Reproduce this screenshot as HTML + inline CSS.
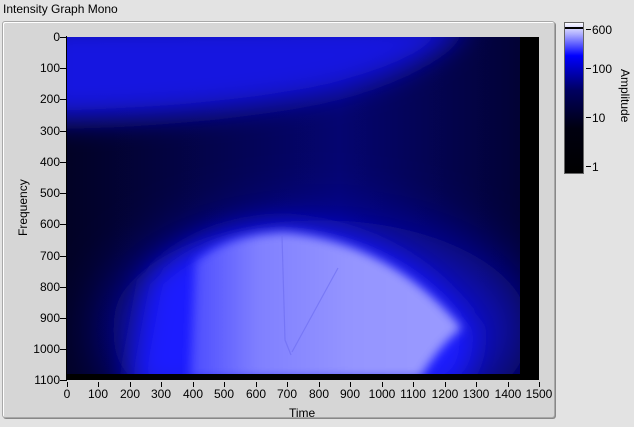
<!DOCTYPE html>
<html><head><style>
html,body{margin:0;width:634px;height:427px;overflow:hidden}
body{background:#e3e3e3;font-family:"Liberation Sans",sans-serif;font-size:12px;color:#000;position:relative}
.a{position:absolute}
.yl{position:absolute;left:10px;width:50px;text-align:right;line-height:12px}
.xl{position:absolute;top:388px;width:40px;text-align:center;line-height:12px}
</style></head><body>
<div class="a" style="left:3px;top:2px;font-size:12px">Intensity Graph Mono</div>
<div class="a" style="left:2px;top:21px;width:551px;height:395px;background:#d6d6d6;border:1px solid #a8a8a8;border-radius:3px;box-shadow:inset 1px 1px 0 #fff,1px 1px 0 #888"></div>
<svg class="a" style="left:0;top:0" width="634" height="427">
<defs>
<filter id="b1" filterUnits="userSpaceOnUse" x="0" y="0" width="634" height="427"><feGaussianBlur stdDeviation="14"/></filter>
<filter id="b2" filterUnits="userSpaceOnUse" x="0" y="0" width="634" height="427"><feGaussianBlur stdDeviation="5"/></filter>
<filter id="b3" filterUnits="userSpaceOnUse" x="0" y="0" width="634" height="427"><feGaussianBlur stdDeviation="30"/></filter>
<clipPath id="c"><rect x="67" y="37" width="453" height="337"/></clipPath>
<linearGradient id="bg" x1="0" y1="0" x2="1" y2="0"><stop offset="0" stop-color="#020225"/><stop offset=".6" stop-color="#050570"/><stop offset="1" stop-color="#020235"/></linearGradient>
<linearGradient id="br" x1="0" y1="0" x2="1" y2="0"><stop offset="0" stop-color="#4a4aff"/><stop offset=".25" stop-color="#8080ff"/><stop offset=".6" stop-color="#9595ff"/><stop offset="1" stop-color="#9a9aff"/></linearGradient>
<linearGradient id="cb" x1="0" y1="0" x2="0" y2="1"><stop offset="0" stop-color="#fff"/><stop offset=".08" stop-color="#aaaaff"/><stop offset=".22" stop-color="#0000ff"/><stop offset=".45" stop-color="#000060"/><stop offset=".7" stop-color="#000010"/><stop offset="1" stop-color="#000"/></linearGradient>
</defs>
<rect x="67" y="37" width="472" height="343" fill="#000"/>
<g clip-path="url(#c)">
<rect x="67" y="37" width="453" height="337" fill="url(#bg)"/>
<ellipse cx="320" cy="330" rx="210" ry="110" fill="#0808b8" filter="url(#b3)"/>
<path d="M40 20 L470 20 Q430 70 320 95 Q200 118 40 120 Z" fill="#1818e0" filter="url(#b1)"/>
<path d="M130 390 L150 280 Q200 228 285 226 Q410 236 475 330 Q470 390 440 390 Z" fill="#1a1aff" filter="url(#b1)"/>
<path d="M190 378 L195 262 Q225 234 285 232 Q390 242 462 328 Q440 345 420 378 Z" fill="url(#br)" filter="url(#b2)"/>
<path d="M282 236 L285 340 L291 355 M338 268 L292 352" stroke="#6a6af0" stroke-width="1.2" fill="none" opacity=".6"/>
</g>
<rect x="66" y="36" width="1" height="345" fill="#000"/>
<g stroke="#000" stroke-width="1">
<path d="M60 37.5h6M60 68.5h6M60 99.5h6M60 131.5h6M60 162.5h6M60 193.5h6M60 224.5h6M60 256.5h6M60 287.5h6M60 318.5h6M60 349.5h6M60 380.5h6"/>
<path d="M67.5 382v5M98.5 382v5M130.5 382v5M161.5 382v5M193.5 382v5M224.5 382v5M256.5 382v5M287.5 382v5M319.5 382v5M350.5 382v5M382.5 382v5M413.5 382v5M445.5 382v5M476.5 382v5M508.5 382v5M539.5 382v5"/>
<path d="M586 29.5h5M586 68.5h5M586 117.5h5M586 166.5h5"/>
</g>
<rect x="564.5" y="22.5" width="19" height="151" fill="url(#cb)" stroke="#666"/>
<rect x="565" y="27" width="18" height="2" fill="#000"/>
<text x="0" y="0" transform="translate(27 236) rotate(-90)" font-family="Liberation Sans" font-size="12">Frequency</text>
<text x="0" y="0" transform="translate(621 69) rotate(90)" font-family="Liberation Sans" font-size="12">Amplitude</text>
</svg>
<div class="yl" style="top:31px">0</div>
<div class="yl" style="top:62px">100</div>
<div class="yl" style="top:93px">200</div>
<div class="yl" style="top:125px">300</div>
<div class="yl" style="top:156px">400</div>
<div class="yl" style="top:187px">500</div>
<div class="yl" style="top:218px">600</div>
<div class="yl" style="top:250px">700</div>
<div class="yl" style="top:281px">800</div>
<div class="yl" style="top:312px">900</div>
<div class="yl" style="top:343px">1000</div>
<div class="yl" style="top:374px">1100</div>
<div class="xl" style="left:47px">0</div>
<div class="xl" style="left:78px">100</div>
<div class="xl" style="left:110px">200</div>
<div class="xl" style="left:141px">300</div>
<div class="xl" style="left:173px">400</div>
<div class="xl" style="left:204px">500</div>
<div class="xl" style="left:236px">600</div>
<div class="xl" style="left:267px">700</div>
<div class="xl" style="left:299px">800</div>
<div class="xl" style="left:330px">900</div>
<div class="xl" style="left:362px">1000</div>
<div class="xl" style="left:393px">1100</div>
<div class="xl" style="left:425px">1200</div>
<div class="xl" style="left:456px">1300</div>
<div class="xl" style="left:488px">1400</div>
<div class="xl" style="left:519px">1500</div>
<div class="a" style="left:289px;top:406px">Time</div>
<div class="a" style="left:592px;top:23px">600</div>
<div class="a" style="left:592px;top:62px">100</div>
<div class="a" style="left:592px;top:111px">10</div>
<div class="a" style="left:592px;top:160px">1</div>
</body></html>
